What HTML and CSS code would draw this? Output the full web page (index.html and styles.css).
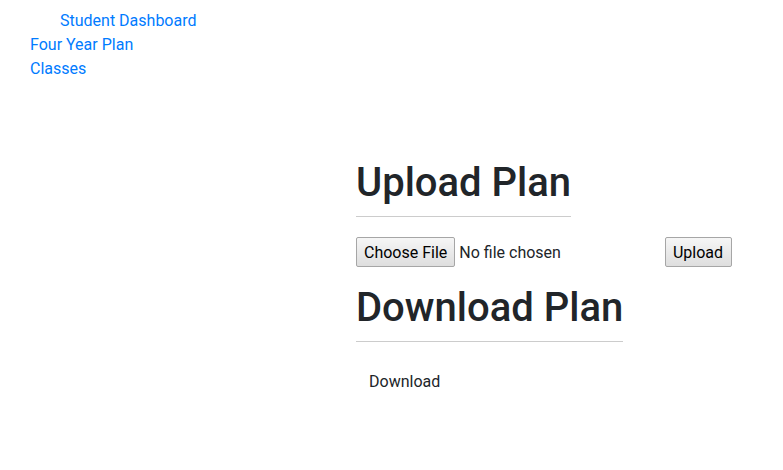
FILE: index.html
```html
<!DOCTYPE html>
<html>
<head>
<meta charset="utf-8">
<link rel="stylesheet" href="styles.css">
</head>
<body>
<div class="page">
  <nav class="nav">
    <ul class="nav-list">
      <li class="nav-item nav-title"><a href="#">Student Dashboard</a></li>
      <li class="nav-item"><a href="#">Four Year Plan</a></li>
      <li class="nav-item"><a href="#">Classes</a></li>
    </ul>
  </nav>
  <main class="main">
    <h1 class="heading">Upload Plan</h1>
    <form class="upload-form">
      <div class="file-input">
        <button type="button" class="btn-default">Choose File</button>
        <span class="file-label">No file chosen</span>
      </div>
      <button type="button" class="btn-default btn-upload">Upload</button>
    </form>
    <h1 class="heading">Download Plan</h1>
    <div class="download-row">
      <a href="#" class="download-link">Download</a>
    </div>
  </main>
</div>
</body>
</html>
```

FILE: styles.css
```css
html, body {
  margin: 0;
  padding: 0;
}
body {
  margin: 8px;
  font-family: Roboto, "Liberation Sans", sans-serif;
  font-size: 16px;
  line-height: 1.5;
  color: #212529;
  background: #fff;
}
a {
  color: #007bff;
  text-decoration: none;
}
.page {
  display: grid;
  grid-template-columns: 348px 1fr;
}
.nav-list {
  list-style: none;
  margin: 0;
  padding: 1px 0 0 22px;
}
.nav-item {
  line-height: 24px;
}
.nav-title {
  padding-left: 30px;
}
.main {
  padding-top: 151px;
}
.heading {
  display: inline-block;
  margin: 0;
  font-size: 40px;
  font-weight: 500;
  line-height: 48px;
  padding-bottom: 9px;
  border-bottom: 1px solid #cccccc;
}
.upload-form {
  display: flex;
  align-items: center;
  margin: 20px 0 17px;
  width: 376px;
  justify-content: space-between;
}
.file-input {
  display: flex;
  align-items: center;
  gap: 4px;
}
.btn-default {
  font-family: Roboto, "Liberation Sans", sans-serif;
  font-size: 16px;
  line-height: 24px;
  color: #000;
  padding: 2px 7px 0;
  height: 30px;
  border: 1px solid #a6a6a6;
  border-radius: 2px;
  background: linear-gradient(#f6f6f6, #dedede);
}
.btn-upload {
  padding: 2px 8px 0 7px;
}
.file-label {
  color: #212529;
  padding-top: 2px;
}
.download-row {
  padding-top: 21px;
}
.download-link {
  display: inline-block;
  padding: 7px 13px;
  color: #212529;
}
```
